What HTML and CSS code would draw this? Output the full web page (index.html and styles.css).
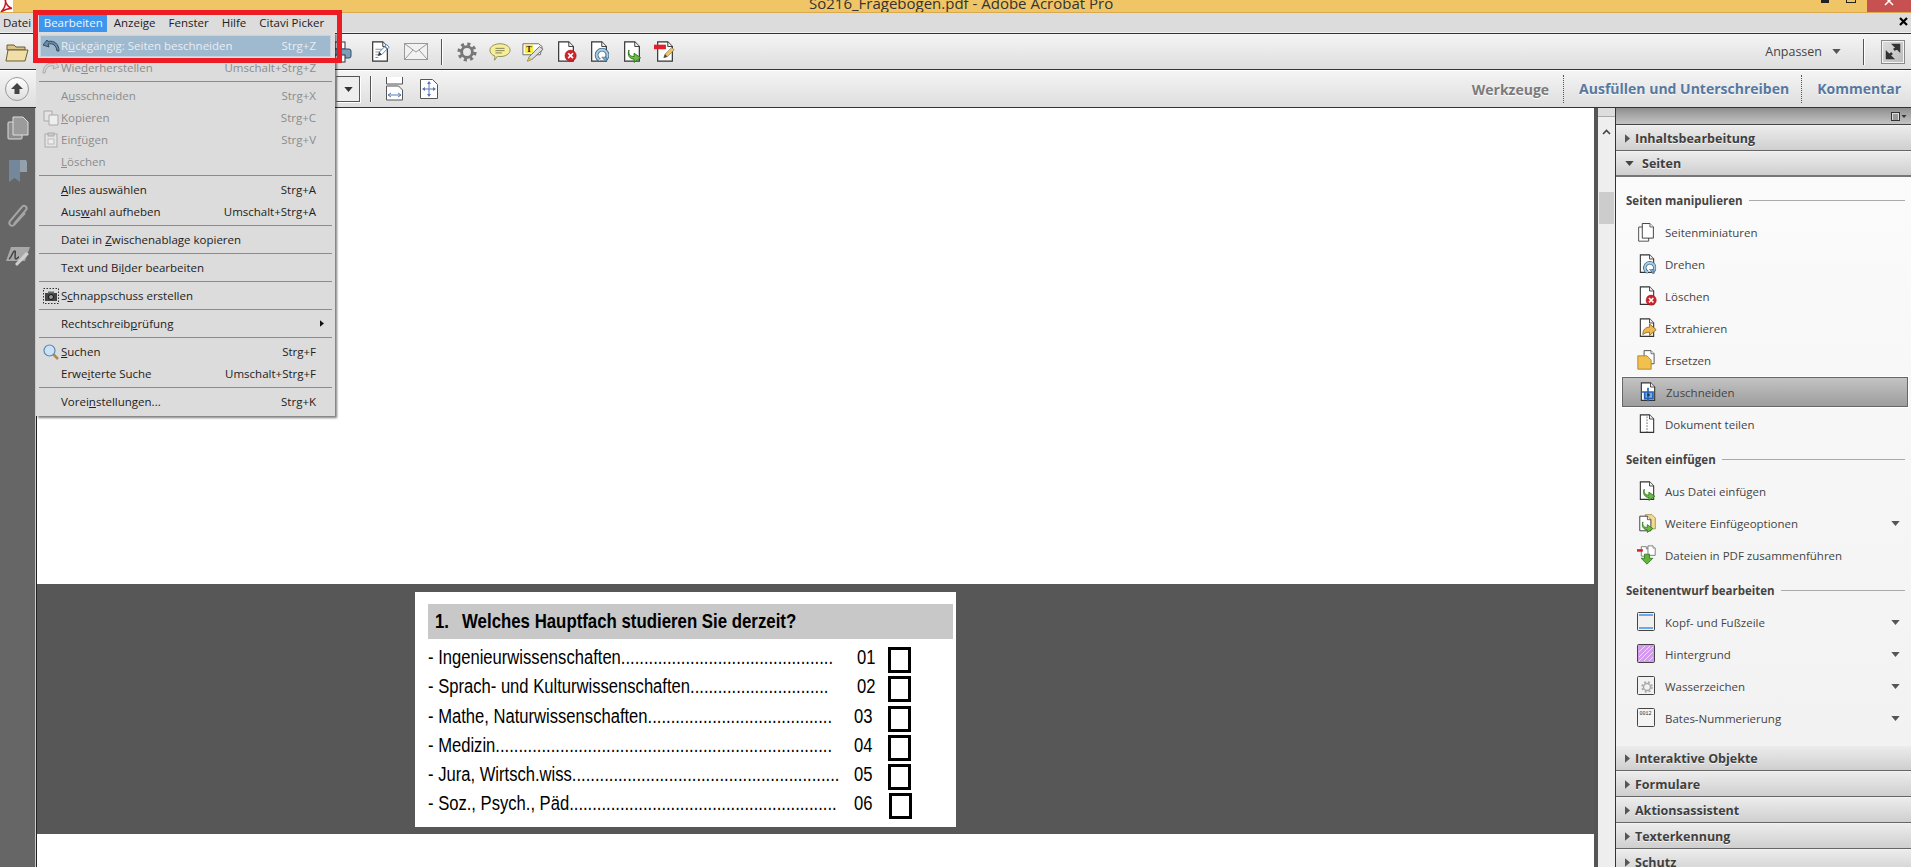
FILE: index.html
```html
<!DOCTYPE html>
<html>
<head>
    <title>So216_Fragebogen.pdf - Adobe Acrobat Pro</title>
    <meta charset="utf-8">
    <link rel="stylesheet" href="styles.css">
</head>
<body>

<svg class="defs" width="0" height="0">
    <symbol id="page" viewBox="0 0 24 24"><path d="M4 1h11l5 5v16H4z" fill="#fff" stroke="#333" stroke-width="1.300"/><path d="M15 1v5h5" fill="#eee" stroke="#333"/></symbol>
    <symbol id="green-arrow" viewBox="0 0 24 24"><path d="M3 4c-1 7 2 10 8 10V9l10 7-10 7v-5C5 18 0 13 3 4z" fill="#6dbb45" stroke="#2e7a1e" stroke-width="1.500"/></symbol>
    <symbol id="rotate" viewBox="0 0 24 24"><path d="M9 21a9 9 0 1 1 7 0" fill="none" stroke="#33627f" stroke-width="6"/><path d="M9 21a9 9 0 1 1 7 0" fill="none" stroke="#a9cbe6" stroke-width="3.500"/><path d="M12 16l8 0 0 8z" fill="#7fa9cc" stroke="#33627f"/></symbol>
    <symbol id="redx" viewBox="0 0 24 24"><circle cx="12" cy="12" r="10.500" fill="#d3222a" stroke="#8d1218"/><path d="M7.500 7.500l9 9M16.500 7.500l-9 9" stroke="#fff" stroke-width="3.200"/></symbol>
    <symbol id="pencil" viewBox="0 0 24 24"><path d="M4 20l2-6L17 3l4 4-11 11z" fill="#e9c46a" stroke="#7a6a3a"/><path d="M4 20l2-6 4 4z" fill="#444"/></symbol>
    <symbol id="pen-blue" viewBox="0 0 24 24"><path d="M3 21l2-6L17 3l4 4L9 19z" fill="#fff" stroke="#4d7ba3" stroke-width="1.500"/><path d="M14 6l4 4" stroke="#4d7ba3" stroke-width="2"/><path d="M3 21l2-6 4 4z" fill="#333"/></symbol>
    <symbol id="tri-down" viewBox="0 0 10 6"><path d="M0 0h10L5 6z"/></symbol>
    <symbol id="tri-right" viewBox="0 0 6 10"><path d="M0 0l6 5-6 5z"/></symbol>
</svg>

<div class="app">
    <div class="titlebar">
        <svg class="pdf-logo" width="13" height="13" viewBox="0 0 13 13"><rect width="13" height="13" fill="#fff"/><path d="M1 12C4 9 6 4 5.500 0M1 12c3-2 7-4 11-3.500M5 0c1 4 3 7 7 8.500" fill="none" stroke="#c8161d" stroke-width="1.500"/></svg>
        <span class="title-text">So216_Fragebogen.pdf - Adobe Acrobat Pro</span>
        <div class="win-btns">
            <i class="win-min"></i>
            <i class="win-max"></i>
            <span class="win-close"><svg width="14" height="6" viewBox="0 0 14 6"><path d="M3 -3l8 8M11 -3l-8 8" stroke="#fff" stroke-width="1.500"/></svg></span>
        </div>
    </div>

    <div class="menubar">
        <span class="mb-item mb-first">Datei</span>
        <span class="mb-item mb-active">Bearbeiten</span>
        <span class="mb-item">Anzeige</span>
        <span class="mb-item">Fenster</span>
        <span class="mb-item">Hilfe</span>
        <span class="mb-item">Citavi Picker</span>
        <svg class="mb-close" width="9" height="9" viewBox="0 0 9 9"><path d="M1 1l7 7M8 1L1 8" stroke="#000" stroke-width="2.200"/></svg>
    </div>

    <div class="toolbar tb-one">
        <svg class="tool t-folder" width="24" height="22" viewBox="0 0 24 22"><path d="M2 4h7l2 2h9v3H2z" fill="#d9c48c" stroke="#6b5c30"/><path d="M1 20l2-11h20l-3 11z" fill="#f0dfa8" stroke="#6b5c30"/></svg>
        <svg class="tool t-print" width="22" height="24" viewBox="0 0 22 24"><rect x="5" y="2" width="10" height="7" fill="#fff" stroke="#333"/><rect x="1" y="9" width="20" height="9" rx="2" fill="#7f9cb8" stroke="#33506c"/><rect x="5" y="15" width="10" height="7" fill="#fff" stroke="#333"/></svg>
        <svg class="tool t-sign" width="22" height="22" viewBox="0 0 24 24"><use href="#page"/><path d="M7 9h7M7 12h6M7 15h4M7 18h3" stroke="#888"/><use href="#pen-blue" x="8" y="1" width="16" height="18"/></svg>
        <svg class="tool t-mail" width="24" height="17" viewBox="0 0 24 17"><rect x=".5" y=".5" width="23" height="16" fill="#f2f2f2" stroke="#999"/><path d="M1 1l11 8 11-8M1 16l8-9M23 16l-8-9" fill="none" stroke="#999"/></svg>
        <i class="sep t-sep"></i>
        <svg class="tool t-gear" width="20" height="20" viewBox="0 0 24 24"><circle cx="12" cy="12" r="6.500" fill="none" stroke="#777" stroke-width="3.500"/><circle cx="12" cy="12" r="9.500" fill="none" stroke="#777" stroke-width="4" stroke-dasharray="3.700 3.760"/></svg>
        <svg class="tool" width="22" height="22" viewBox="0 0 24 24"><path d="M1 10c0-4 5-7 11-7s11 3 11 7-5 7-11 7c-1 0-2 0-3-.3L6 21l.5-4.500C3 15 1 13 1 10z" fill="#f7ee9a" stroke="#8a8a50"/><path d="M7 8h10M7 10.500h10M7 13h7" stroke="#7a7a50"/></svg>
        <svg class="tool" width="22" height="22" viewBox="0 0 24 24"><path d="M1 3h17l4 3-2 9H1z" fill="#fff" stroke="#666"/><rect x="3" y="4" width="9" height="9" fill="#f6ee3a"/><text class="icon-t" x="4.500" y="11.500">T</text><path d="M6 22l2-5 11-11 4 3-12 11z" fill="#ddd" stroke="#666"/><path d="M6 22l2-5 3 3z" fill="#d9c04a"/></svg>
        <svg class="tool" width="22" height="22" viewBox="0 0 24 24"><use href="#page"/><use href="#redx" x="10" y="9" width="14" height="14"/></svg>
        <svg class="tool" width="22" height="22" viewBox="0 0 24 24"><use href="#page"/><use href="#rotate" x="7" y="7" width="16" height="16"/></svg>
        <svg class="tool" width="22" height="22" viewBox="0 0 24 24"><use href="#page"/><use href="#green-arrow" x="6" y="7" width="18" height="17"/></svg>
        <svg class="tool" width="22" height="22" viewBox="0 0 24 24"><use href="#page"/><rect x="0" y="4" width="13" height="5" fill="#e2202a"/><use href="#pencil" x="8" y="5" width="16" height="16"/></svg>
        <span class="anpassen">Anpassen</span>
        <svg class="anp-arrow" width="9" height="5"><use href="#tri-down" fill="#555"/></svg>
        <i class="sep anp-sep"></i>
        <span class="expand"><svg width="22" height="21" viewBox="0 0 22 21"><path d="M12 9l5-5M17 4h-5l5 5zM10 12l-5 5M5 17h5l-5-5z" stroke="#333" stroke-width="2.500" fill="#333"/></svg></span>
    </div>

    <div class="toolbar tb-two">
        <span class="up-btn"><svg width="14" height="14" viewBox="0 0 14 14"><path d="M7 1l6 6H9.500v5h-5V7H1z" fill="#444"/></svg></span>
        <span class="combo"><svg width="9" height="5"><use href="#tri-down" fill="#333"/></svg></span>
        <i class="sep combo-sep"></i>
        <svg class="fit-w" width="17" height="24" viewBox="0 0 17 24"><path d="M.5 0v7h16V0" fill="#fff" stroke="#555"/><path d="M.5 9h12l4 4v10H.5z" fill="#fff" stroke="#555"/><path d="M2 18h13M2 18l3-2M2 18l3 2M15 18l-3-2M15 18l-3 2" stroke="#5a78b8"/></svg>
        <svg class="fit-p" width="18" height="20" viewBox="0 0 18 20"><path d="M.5 .5h12l5 5v14H.5z" fill="#fff" stroke="#555"/><path d="M9 3v14M3 10h12" stroke="#5a78b8"/><path d="M9 2l-2 3h4zM9 18l-2-3h4zM2 10l3-2v4zM16 10l-3-2v4z" fill="#5a78b8"/></svg>
        <span class="tab tab-tools">Werkzeuge</span>
        <span class="tab tab-blue tab-sep">Ausfüllen und Unterschreiben</span>
        <span class="tab tab-blue tab-sep tab-end">Kommentar</span>
    </div>

    <div class="main">
        <div class="nav">
            <svg width="24" height="24" viewBox="0 0 24 24"><rect x="2" y="6" width="14" height="17" rx="1" fill="#8d8d8d" stroke="#ddd"/><path d="M7 1h10l5 5v13H7z" fill="#9b9b9b" stroke="#ddd"/></svg>
            <svg width="20" height="26" viewBox="0 0 20 26"><path d="M1 1h11v22l-5.500-4L1 23z" fill="#74879b"/><path d="M12 1h6l1 2v10h-7z" fill="#93a0ad"/></svg>
            <svg width="24" height="24" viewBox="0 0 24 24"><path d="M8 20L20 6c2-3-2-6-4-3L4 17c-2 3 1 6 4 4L19 9" fill="none" stroke="#a5a5a5" stroke-width="2"/></svg>
            <svg width="24" height="20" viewBox="0 0 24 20"><path d="M5 0h19l-5 14H0z" fill="#a8a8a8"/><path d="M3 12c3-1 3-8 6-8 1 0-1 8 1 8 1 0 2-2 3-2" fill="none" stroke="#444" stroke-width="1.500"/><path d="M9 17l11-12 3 2-12 12z" fill="#cfcfcf"/></svg>
        </div>

        <div class="doc">
            <div class="doc-top"></div>
            <div class="doc-band">
                <div class="form">
                    <div class="form-head"><span class="form-title"><span class="form-no">1.</span>Welches Hauptfach studieren Sie derzeit?</span></div>
                    <div class="form-row"><span class="form-label">- Ingenieurwissenschaften..............................................</span><span class="form-num"><span>01</span></span><i class="form-box"></i></div>
                    <div class="form-row"><span class="form-label">- Sprach- und Kulturwissenschaften..............................</span><span class="form-num"><span>02</span></span><i class="form-box"></i></div>
                    <div class="form-row"><span class="form-label">- Mathe, Naturwissenschaften........................................</span><span class="form-num num-left"><span>03</span></span><i class="form-box"></i></div>
                    <div class="form-row"><span class="form-label">- Medizin.........................................................................</span><span class="form-num num-left"><span>04</span></span><i class="form-box"></i></div>
                    <div class="form-row"><span class="form-label">- Jura, Wirtsch.wiss..........................................................</span><span class="form-num num-left"><span>05</span></span><i class="form-box"></i></div>
                    <div class="form-row"><span class="form-label">- Soz., Psych., Päd..........................................................</span><span class="form-num num-left"><span>06</span></span><i class="form-box box-last"></i></div>
                </div>
            </div>
            <div class="doc-rest"></div>
        </div>

        <div class="splitter"></div>

        <div class="scrollbar">
            <i class="sb-cap"></i>
            <svg class="sb-up" width="9" height="6" viewBox="0 0 9 6"><path d="M1 5l3.500-3.500L8 5" fill="none" stroke="#444" stroke-width="1.600"/></svg>
            <i class="sb-thumb"></i>
        </div>

        <div class="panel">
            <div class="panel-top"><svg width="16" height="9" viewBox="0 0 16 9"><rect x=".5" y=".5" width="8" height="8" fill="#ddd" stroke="#333"/><path d="M2 3h5M2 5h5M2 7h5" stroke="#333" stroke-width=".8"/><path d="M10.500 3h5L13 6z" fill="#333"/></svg></div>
            <div class="acc"><svg class="acc-right" width="5" height="9"><use href="#tri-right" fill="#555"/></svg>Inhaltsbearbeitung</div>
            <div class="acc acc-open"><svg class="acc-down" width="9" height="5"><use href="#tri-down" fill="#444"/></svg>Seiten</div>
            <div class="panel-body">
                <div class="group-title">Seiten manipulieren</div>
                <div class="item"><svg width="20" height="20" viewBox="0 0 24 24"><path d="M2 6h12v17H2z" fill="#fff" stroke="#333"/><use href="#page" x="3" width="20" height="22"/></svg>Seitenminiaturen</div>
                <div class="item"><svg width="20" height="20" viewBox="0 0 24 24"><use href="#page"/><use href="#rotate" x="7" y="8" width="16" height="16"/></svg>Drehen</div>
                <div class="item"><svg width="20" height="20" viewBox="0 0 24 24"><use href="#page"/><use href="#redx" x="10" y="10" width="14" height="14"/></svg>Löschen</div>
                <div class="item"><svg width="20" height="20" viewBox="0 0 24 24"><use href="#page"/><path d="M7 20c0-6 3-9 8-9V7l8 7-8 7v-4c-3 0-6 1-8 3z" fill="#f0b84c" stroke="#8a6420"/></svg>Extrahieren</div>
                <div class="item"><svg width="20" height="20" viewBox="0 0 24 24"><use href="#page" x="5" width="19" height="18"/><path d="M1 7h11l5 5v11H1z" fill="#f2c04e" stroke="#a87c20"/></svg>Ersetzen</div>
                <div class="item item-on"><svg width="20" height="20" viewBox="0 0 24 24"><use href="#page"/><path d="M4 12h14v8H8v-8M12 7v16" fill="#7fa9d8" stroke="#2263b8" stroke-width="2"/><rect x="11" y="14" width="3" height="3" fill="#333"/></svg>Zuschneiden</div>
                <div class="item"><svg width="20" height="20" viewBox="0 0 24 24"><use href="#page"/><path d="M12 3v19" stroke="#555" stroke-dasharray="2 1.500"/></svg>Dokument teilen</div>

                <div class="group-title gt-next">Seiten einfügen</div>
                <div class="item"><svg width="20" height="20" viewBox="0 0 24 24"><use href="#page"/><use href="#green-arrow" x="6" y="7" width="18" height="17"/></svg>Aus Datei einfügen</div>
                <div class="item"><svg width="20" height="20" viewBox="0 0 24 24"><path d="M10 2h8l4 4v13H10z" fill="#f3dc8e" stroke="#a08a40"/><use href="#page" y="2" width="20" height="22"/><use href="#green-arrow" x="5" y="8" width="16" height="16"/></svg>Weitere Einfügeoptionen<svg class="item-arrow" width="9" height="5"><use href="#tri-down" fill="#555"/></svg></div>
                <div class="item"><svg width="20" height="20" viewBox="0 0 24 24"><use href="#page" x="3" y="1" width="13" height="14"/><use href="#page" x="11" width="13" height="14"/><rect x="0" y="5" width="7" height="3" fill="#d3222a"/><path d="M9 11h6v5h4l-7 7-7-7h4z" fill="#62b23c" stroke="#2e7a1e"/></svg>Dateien in PDF zusammenführen</div>

                <div class="group-title gt-next">Seitenentwurf bearbeiten</div>
                <div class="item"><svg width="20" height="20" viewBox="0 0 20 20"><rect x=".5" y=".5" width="17" height="18" rx="1" fill="#f0f0f0" stroke="#444"/><path d="M2 3h14M2 16h14" stroke="#6fa8e6" stroke-width="2"/></svg>Kopf- und Fußzeile<svg class="item-arrow" width="9" height="5"><use href="#tri-down" fill="#555"/></svg></div>
                <div class="item"><svg width="20" height="20" viewBox="0 0 20 20"><rect x=".5" y=".5" width="17" height="18" rx="1" fill="#d49af0" stroke="#444"/><path d="M2 8l6-6M2 13L13 2M2 17L16 3M7 17l9-9M12 17l4-4" stroke="#f0dcf8"/></svg>Hintergrund<svg class="item-arrow" width="9" height="5"><use href="#tri-down" fill="#555"/></svg></div>
                <div class="item"><svg width="20" height="20" viewBox="0 0 20 20"><rect x=".5" y=".5" width="17" height="18" rx="1" fill="#f2f2f2" stroke="#444"/><circle cx="10" cy="11" r="3.500" fill="none" stroke="#aaa" stroke-width="1.500"/><circle cx="10" cy="11" r="5" fill="none" stroke="#aaa" stroke-width="1.500" stroke-dasharray="2 2"/></svg>Wasserzeichen<svg class="item-arrow" width="9" height="5"><use href="#tri-down" fill="#555"/></svg></div>
                <div class="item"><svg width="20" height="20" viewBox="0 0 20 20"><rect x=".5" y=".5" width="17" height="18" rx="1" fill="#f4f4f4" stroke="#444"/><text class="icon-num" x="2.500" y="7">0012</text></svg>Bates-Nummerierung<svg class="item-arrow" width="9" height="5"><use href="#tri-down" fill="#555"/></svg></div>
            </div>
            <div class="acc"><svg class="acc-right" width="5" height="9"><use href="#tri-right" fill="#555"/></svg>Interaktive Objekte</div>
            <div class="acc"><svg class="acc-right" width="5" height="9"><use href="#tri-right" fill="#555"/></svg>Formulare</div>
            <div class="acc"><svg class="acc-right" width="5" height="9"><use href="#tri-right" fill="#555"/></svg>Aktionsassistent</div>
            <div class="acc"><svg class="acc-right" width="5" height="9"><use href="#tri-right" fill="#555"/></svg>Texterkennung</div>
            <div class="acc"><svg class="acc-right" width="5" height="9"><use href="#tri-right" fill="#555"/></svg>Schutz</div>
        </div>
    </div>

    <!-- aufgeklapptes Menue -->
    <div class="menu">
        <div class="m-row m-hot"><span class="m-ico"><svg width="18" height="14" viewBox="0 0 18 14"><path d="M5 1L1 6l6 2-1-3c5-1 8 1 9 7h2C17 5 12 1 6 2.500z" fill="#6d8aa6" stroke="#2f4a63"/></svg></span><span class="m-text">R<u>ü</u>ckgängig: Seiten beschneiden</span><span class="m-key">Strg+Z</span></div>
        <div class="m-row m-off"><span class="m-ico"><svg width="18" height="14" viewBox="0 0 18 14"><path d="M13 1l4 5-6 2 1-3C7 4 4 6 3 12H1C1 5 6 1 12 2.500z" fill="#d5d5d5" stroke="#aaa"/></svg></span><span class="m-text">Wie<u>d</u>erherstellen</span><span class="m-key">Umschalt+Strg+Z</span></div>
        <div class="m-sep"></div>
        <div class="m-row m-off"><span class="m-ico"></span><span class="m-text">A<u>u</u>sschneiden</span><span class="m-key">Strg+X</span></div>
        <div class="m-row m-off"><span class="m-ico"><svg width="16" height="16" viewBox="0 0 16 16"><path d="M1 1h8v10H1z" fill="#e4e4e4" stroke="#aaa"/><path d="M6 5h9v10H6z" fill="#eee" stroke="#aaa"/></svg></span><span class="m-text"><u>K</u>opieren</span><span class="m-key">Strg+C</span></div>
        <div class="m-row m-off"><span class="m-ico"><svg width="14" height="16" viewBox="0 0 14 16"><rect x="1" y="2" width="12" height="13" fill="#e4e4e4" stroke="#aaa"/><rect x="4" y="1" width="6" height="3" fill="#ccc" stroke="#aaa"/><rect x="4" y="7" width="6" height="5" fill="#eee" stroke="#bbb"/></svg></span><span class="m-text">Ein<u>f</u>ügen</span><span class="m-key">Strg+V</span></div>
        <div class="m-row m-off"><span class="m-ico"></span><span class="m-text"><u>L</u>öschen</span></div>
        <div class="m-sep"></div>
        <div class="m-row"><span class="m-ico"></span><span class="m-text"><u>A</u>lles auswählen</span><span class="m-key">Strg+A</span></div>
        <div class="m-row"><span class="m-ico"></span><span class="m-text">Aus<u>w</u>ahl aufheben</span><span class="m-key">Umschalt+Strg+A</span></div>
        <div class="m-sep"></div>
        <div class="m-row"><span class="m-ico"></span><span class="m-text">Datei in <u>Z</u>wischenablage kopieren</span></div>
        <div class="m-sep"></div>
        <div class="m-row"><span class="m-ico"></span><span class="m-text">Text und Bi<u>l</u>der bearbeiten</span></div>
        <div class="m-sep"></div>
        <div class="m-row"><span class="m-ico"><svg width="16" height="16" viewBox="0 0 16 16"><rect x=".5" y=".5" width="15" height="15" fill="none" stroke="#333" stroke-dasharray="1.500 1.500"/><rect x="2" y="5" width="12" height="8" fill="#444"/><rect x="5" y="3.500" width="6" height="2" fill="#666"/><circle cx="8" cy="9" r="2.500" fill="#999" stroke="#111"/></svg></span><span class="m-text">S<u>c</u>hnappschuss erstellen</span></div>
        <div class="m-sep"></div>
        <div class="m-row"><span class="m-ico"></span><span class="m-text">Rechtschreib<u>p</u>rüfung</span><svg class="m-sub" width="4" height="7"><use href="#tri-right" fill="#111"/></svg></div>
        <div class="m-sep"></div>
        <div class="m-row"><span class="m-ico"><svg width="16" height="16" viewBox="0 0 16 16"><path d="M10 10l5 5" stroke="#a98a55" stroke-width="2.500"/><circle cx="6.500" cy="6.500" r="5.500" fill="#c9e2f6" stroke="#5d87ab" stroke-width="1.200"/></svg></span><span class="m-text"><u>S</u>uchen</span><span class="m-key">Strg+F</span></div>
        <div class="m-row"><span class="m-ico"></span><span class="m-text">Erwe<u>i</u>terte Suche</span><span class="m-key">Umschalt+Strg+F</span></div>
        <div class="m-sep"></div>
        <div class="m-row"><span class="m-ico"></span><span class="m-text">Vorei<u>n</u>stellungen...</span><span class="m-key">Strg+K</span></div>
    </div>

    <div class="red-mark"></div>
</div>

</body>
</html>
```

FILE: styles.css
```css
html, body {
    height: 100%;
}

body {
    margin: 0;
    overflow: hidden;
    background: #fff;
    font-family: "Open Sans", "Noto Sans", sans-serif;
    font-size: 11.5px;
    color: #222;
}

.defs {
    position: absolute;
}

.app {
    position: relative;
    height: 867px;
    display: flex;
    flex-direction: column;
    overflow: hidden;
}

/* titelleiste */
.titlebar {
    height: 12px;
    flex: none;
    display: flex;
    background: #f0c566;
    border-bottom: 1px solid #d8a94e;
    overflow: hidden;
}

.pdf-logo {
    flex: none;
}

.title-text {
    margin-left: 796px;
    font-size: 15px;
    line-height: 6px;
    color: #333;
    white-space: nowrap;
}

.win-btns {
    margin-left: auto;
    display: flex;
}

.win-btns i {
    display: block;
    height: 3px;
}

.win-min {
    width: 8px;
    margin-right: 17px;
    background: #222;
}

.win-max {
    width: 8px;
    height: 2px !important;
    margin-right: 11px;
    border: 1px solid #222;
    border-top: 0;
}

.win-close {
    width: 44px;
    height: 13px;
    background: #c75050;
    text-align: center;
    line-height: 0;
}

/* menueleiste */
.menubar {
    height: 19px;
    flex: none;
    display: flex;
    align-items: flex-end;
    background: #dcdcdc;
    border-bottom: 1px solid #efefef;
}

.mb-item {
    height: 17px;
    line-height: 16px;
    padding: 0 6.500px;
    color: #222;
    white-space: nowrap;
}

.mb-first {
    padding: 0 3px;
    margin-right: 5px;
}

.mb-active {
    width: 68px;
    padding: 0;
    text-align: center;
    background: #3d95ee;
    color: #f2f6fa;
}

.mb-close {
    margin-left: auto;
    margin-right: 3px;
    margin-bottom: 6px;
}

/* werkzeugleisten */
.toolbar {
    flex: none;
    display: flex;
    align-items: center;
    background: linear-gradient(#f4f4f4, #dedede);
}

.tb-one {
    height: 35px;
    border-top: 1px solid #333;
    border-bottom: 1px solid #333;
}

.tb-two {
    height: 36px;
    border-top: 1px solid #fff;
    border-bottom: 1px solid #333;
}

.tool {
    flex: none;
    margin-right: 11px;
}

.t-folder {
    margin-left: 5px;
    margin-right: 9px;
}

.t-print {
    margin-left: 292px;
    margin-right: 17px;
}

.t-sign {
    margin-right: 13px;
}

.t-mail {
    margin-right: 13px;
}

.t-gear {
    margin-right: 12px;
}

.sep {
    flex: none;
    display: block;
    width: 1px;
    height: 26px;
    background: #555;
    box-shadow: 1px 0 0 #fff;
}

.t-sep {
    margin-right: 15px;
}

.icon-t {
    font: bold 9px "Liberation Serif", serif;
    fill: #222;
}

.icon-num {
    font: 5px "Liberation Mono", monospace;
    fill: #333;
}

.anpassen {
    margin-left: auto;
    font-size: 12.5px;
    color: #444;
}

.anp-arrow {
    margin-left: 10px;
}

.anp-sep {
    margin-left: 22px;
}

.expand {
    width: 22px;
    height: 22px;
    margin: 0 6px 0 17px;
    border: 1px solid #888;
    background: linear-gradient(135deg, #ddd, #bbb);
    box-shadow: inset 0 0 0 1px #f4f4f4;
}

.expand svg {
    display: block;
}

.up-btn {
    flex: none;
    box-sizing: border-box;
    width: 24px;
    height: 24px;
    margin-left: 5px;
    display: flex;
    align-items: center;
    justify-content: center;
    border: 1px solid #999;
    border-radius: 50%;
    background: linear-gradient(#fff, #ddd);
}

.combo {
    flex: none;
    box-sizing: border-box;
    width: 24px;
    height: 26px;
    margin-left: 307px;
    display: flex;
    align-items: center;
    justify-content: center;
    border: 1px solid #555;
    border-left: 1px solid #ccc;
    background: #eee;
    box-shadow: 1px 1px 0 #fff;
}

.combo-sep {
    margin-left: 10px;
}

.fit-w {
    flex: none;
    margin-left: 15px;
}

.fit-p {
    flex: none;
    margin-left: 17px;
}

.tab {
    font-size: 14px;
    font-weight: 700;
    white-space: nowrap;
    text-shadow: 0 1px 1px #fff;
}

.tab-tools {
    margin-left: auto;
    color: #7b7b7b;
}

.tab-blue {
    color: #56789f;
}

.tab-sep {
    margin-left: 14px;
    padding-left: 15px;
    line-height: 28px;
    border-left: 1px dotted #555;
}

.tab-end {
    margin-left: 12px;
    margin-right: 10px;
}

/* hauptbereich */
.main {
    flex: 1;
    min-height: 0;
    display: flex;
}

.nav {
    flex: none;
    width: 35px;
    display: flex;
    flex-direction: column;
    align-items: center;
    gap: 19px;
    padding-top: 8px;
    background: #666;
    border-right: 1px solid #ccc;
    box-shadow: 1px 0 0 #222;
}

.doc {
    flex: 1;
    min-width: 0;
    display: flex;
    flex-direction: column;
    margin-left: 1px;
    background: #fff;
}

.doc-top {
    height: 476px;
    flex: none;
}

.doc-band {
    height: 250px;
    flex: none;
    padding-left: 378px;
    padding-top: 8px;
    box-sizing: border-box;
    background: #575757;
}

.form {
    width: 541px;
    height: 235px;
    padding: 12px 3px 0 13px;
    box-sizing: border-box;
    background: #fff;
    font-family: "Liberation Sans", sans-serif;
    color: #000;
}

.form-head {
    height: 35px;
    line-height: 33px;
    margin-bottom: 5px;
    padding-left: 7px;
    background: #c8c8c8;
    font-size: 20.500px;
    font-weight: 700;
    white-space: nowrap;
}

/* Arial Narrow gibt es hier nicht, also schmal gezogen */
.form-title {
    display: inline-block;
    transform: scaleX(.82);
    transform-origin: left;
}

.form-no {
    display: inline-block;
    width: 33px;
}

.form-row {
    height: 29.300px;
    display: flex;
    font-size: 20px;
    line-height: 27px;
}

.form-label {
    flex: none;
    display: block;
    width: 425px;
    white-space: nowrap;
    transform: scaleX(.83);
    transform-origin: left;
}

.form-num {
    flex: none;
    width: 35px;
    padding-left: 4px;
    box-sizing: border-box;
}

.form-num span {
    display: inline-block;
    transform: scaleX(.83);
    transform-origin: left;
}

.num-left {
    padding-left: 1px;
}

.form-box {
    flex: none;
    width: 17px;
    height: 20px;
    margin-top: 3px;
    border: 3px solid #000;
}

.box-last {
    margin-left: 1px;
}

.splitter {
    flex: none;
    width: 4px;
    background: #555;
}

.scrollbar {
    flex: none;
    width: 17px;
    background: #eee;
    border-right: 1px solid #333;
    display: flex;
    flex-direction: column;
    align-items: center;
}

.sb-cap {
    display: block;
    width: 100%;
    height: 8px;
    background: #ddd;
    border-bottom: 1px solid #aaa;
}

.sb-up {
    margin-top: 12px;
}

.sb-thumb {
    display: block;
    width: 15px;
    height: 32px;
    margin-top: 57px;
    background: #ccc;
}

/* rechte leiste */
.panel {
    flex: none;
    width: 295px;
    display: flex;
    flex-direction: column;
    overflow: hidden;
    background: #f6f6f6;
}

.panel-top {
    flex: none;
    height: 16px;
    display: flex;
    align-items: center;
    justify-content: flex-end;
    padding-right: 4px;
    background: linear-gradient(#8e8e8e, #c4c4c4);
    border-bottom: 1px solid #444;
}

.acc {
    flex: none;
    box-sizing: border-box;
    height: 26px;
    display: flex;
    align-items: center;
    padding-left: 9px;
    gap: 5px;
    background: linear-gradient(#ececec, #cfcfcf);
    border-top: 1px solid #f2f2f2;
    border-bottom: 1px solid #666;
    font-size: 12.500px;
    font-weight: 700;
    color: #3f3f3f;
    white-space: nowrap;
    text-shadow: 0 1px 0 #f4f4f4;
}

.acc-open {
    border-bottom: 2px solid #777;
}

.acc-down {
    margin-right: 3px;
}

.panel-body {
    flex: none;
    height: 568px;
    box-sizing: border-box;
    padding-top: 12px;
    background: linear-gradient(#fbfbfb, #f2f2f2);
}

.group-title {
    height: 22px;
    margin: 0 6px 5px 10px;
    display: flex;
    align-items: center;
    gap: 6px;
    font-weight: 700;
    font-size: 11.500px;
    color: #444;
    white-space: nowrap;
}

.group-title::after {
    content: "";
    flex: 1;
    height: 1px;
    background: #aaa;
}

.gt-next {
    margin-top: 8px;
}

.item {
    box-sizing: border-box;
    height: 32px;
    margin-left: 21px;
    margin-right: 3px;
    display: flex;
    align-items: center;
    gap: 8px;
    color: #444;
    white-space: nowrap;
}

.item-on {
    height: 30px;
    margin: 1px 3px 1px 6px;
    padding-left: 15px;
    background: linear-gradient(#c3c3c3, #9d9d9d);
    border: 1px solid #666;
    box-shadow: 0 0 0 1px #fff;
}

.item-arrow {
    margin-left: auto;
    margin-right: 8px;
}

/* menue, liegt ueber allem */
.menu {
    position: absolute;
    left: 36px;
    top: 32px;
    width: 299px;
    height: 384px;
    padding: 3px 4px 2px 4px;
    box-sizing: border-box;
    background: #dcdcdc;
    box-shadow: 2px 2px 2px rgba(0, 0, 0, .5);
}

.m-row {
    box-sizing: border-box;
    height: 22px;
    padding-bottom: 1px;
    display: flex;
    align-items: center;
    color: #222;
    white-space: nowrap;
}

.m-ico {
    flex: none;
    width: 21px;
    display: flex;
    justify-content: center;
}

.m-text {
    flex: 1;
}

.m-key {
    padding-right: 15px;
}

.m-sub {
    margin-right: 7px;
}

.m-off {
    color: #8c8c8c;
}

.m-hot {
    background: #9fb9cf;
    box-shadow: inset 0 0 0 1px #c4d3df;
    color: #e8eef3;
}

.m-sep {
    height: 1px;
    margin: 2px 0 3px -1px;
    width: 293px;
    background: #8c8c8c;
}

.red-mark {
    position: absolute;
    left: 33px;
    top: 10px;
    width: 299px;
    height: 43px;
    border: 5px solid #ed1c24;
}
```
